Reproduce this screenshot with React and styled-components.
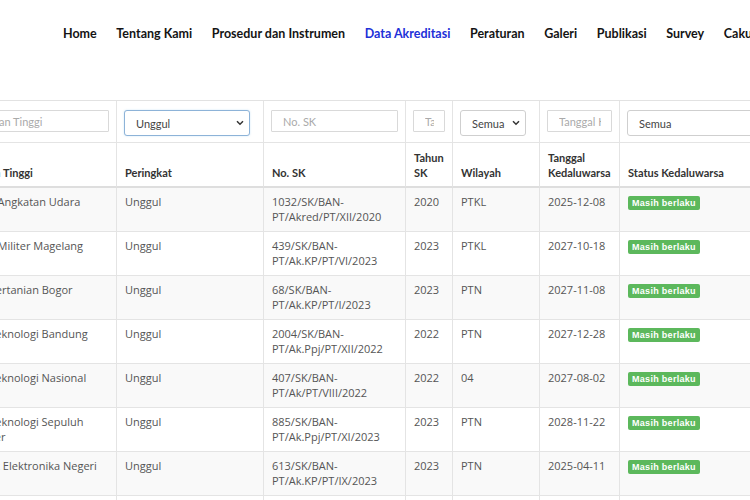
import React from 'react'
import styled, { createGlobalStyle, css } from 'styled-components'

const GlobalStyle = createGlobalStyle`
  html, body {
    margin: 0;
    padding: 0;
    background: #fff;
  }
  body {
    font-family: 'Open Sans', 'Liberation Sans', sans-serif;
    overflow: hidden;
  }
`

const menu = ['Home', 'Tentang Kami', 'Prosedur dan Instrumen', 'Data Akreditasi', 'Peraturan', 'Galeri', 'Publikasi', 'Survey', 'Cakupan']

const rows = [
  ['Akademi Angkatan Udara', '1032/SK/BAN-PT/Akred/PT/XII/2020', '2020', 'PTKL', '2025-12-08'],
  ['Akademi Militer Magelang', '439/SK/BAN-PT/Ak.KP/PT/VI/2023', '2023', 'PTKL', '2027-10-18'],
  ['Institut Pertanian Bogor', '68/SK/BAN-PT/Ak.KP/PT/I/2023', '2023', 'PTN', '2027-11-08'],
  ['Institut Teknologi Bandung', '2004/SK/BAN-PT/Ak.Ppj/PT/XII/2022', '2022', 'PTN', '2027-12-28'],
  ['Institut Teknologi Nasional', '407/SK/BAN-PT/Ak/PT/VIII/2022', '2022', '04', '2027-08-02'],
  ['Institut Teknologi Sepuluh Nopember', '885/SK/BAN-PT/Ak.Ppj/PT/XI/2023', '2023', 'PTN', '2028-11-22'],
  ['Politeknik Elektronika Negeri Surabaya', '613/SK/BAN-PT/Ak.KP/PT/IX/2023', '2023', 'PTN', '2025-04-11'],
  ['Universitas Airlangga', '1287/SK/BAN-PT/Ak.Ppj/PT/XII/2022', '2022', 'PTN', '2027-12-20']
]

const widths = [175, 147, 142, 47, 87, 80, 170]

const Dropdown = ({ value, options, focused, wide, arrow = true }) => (
  <SelectBox wide={wide}>
    <Select focused={focused} defaultValue={value}>
      {options.map(o => <option key={o}>{o}</option>)}
    </Select>
    {arrow && (
      <Chevron width="8" height="6" viewBox="0 0 8 6">
        <path d="M1 1.2l3 3 3-3" fill="none" stroke="#333" strokeWidth="1.5" />
      </Chevron>
    )}
  </SelectBox>
)

const App = () => (
  <Page>
    <GlobalStyle />
    <Nav>
      {menu.map(item => (
        <NavItem key={item} active={item === 'Data Akreditasi'}>{item}</NavItem>
      ))}
    </Nav>
    <TableWrap>
      <Table>
        <colgroup>
          {widths.map((w, i) => <col key={i} style={{ width: w }} />)}
        </colgroup>
        <thead>
          <tr>
            <FilterCell><Input placeholder="Perguruan Tinggi" /></FilterCell>
            <FilterCell>
              <Dropdown focused value="Unggul" options={['Semua', 'Unggul']} />
            </FilterCell>
            <FilterCell><Input placeholder="No. SK" /></FilterCell>
            <FilterCell><Input placeholder="Tahun SK" /></FilterCell>
            <FilterCell>
              <Dropdown value="Semua" options={['Semua']} />
            </FilterCell>
            <FilterCell><Input placeholder="Tanggal Kedaluwarsa" /></FilterCell>
            <FilterCell>
              <Dropdown wide arrow={false} value="Semua" options={['Semua']} />
            </FilterCell>
          </tr>
          <tr>
            <Th>Perguruan Tinggi</Th>
            <Th>Peringkat</Th>
            <Th>No. SK</Th>
            <Th>Tahun SK</Th>
            <Th>Wilayah</Th>
            <Th>Tanggal Kedaluwarsa</Th>
            <Th>Status Kedaluwarsa</Th>
          </tr>
        </thead>
        <tbody>
          {rows.map((r, i) => (
            <Row key={i} striped={i % 2 === 0}>
              <Td>{r[0]}</Td>
              <Td>Unggul</Td>
              <Td>{r[1]}</Td>
              <Td>{r[2]}</Td>
              <Td>{r[3]}</Td>
              <Td>{r[4]}</Td>
              <Td><Badge>Masih berlaku</Badge></Td>
            </Row>
          ))}
        </tbody>
      </Table>
    </TableWrap>
  </Page>
)

const Page = styled.div`
  width: 750px;
  height: 500px;
  overflow: hidden;
`

const Nav = styled.nav`
  display: flex;
  align-items: center;
  gap: 19.6px;
  height: 66px;
  padding-left: 63px;
  white-space: nowrap;
`

const NavItem = styled.a`
  font-family: Lato, 'Liberation Sans', sans-serif;
  font-weight: 700;
  font-size: 12.5px;
  color: #141414;
  text-decoration: none;

  ${props =>
    props.active &&
    css`
      color: #2130d8;
    `};
`

const TableWrap = styled.div`
  margin-top: 34px;
  overflow: hidden;
`

const Table = styled.table`
  margin-left: -58px;
  table-layout: fixed;
  width: 848px;
  border-collapse: separate;
  border-spacing: 0;
  border-top: 1px solid #e2e2e2;
`

const FilterCell = styled.td`
  padding: 9px 7px 6px;
  vertical-align: top;
  border-right: 1px solid #e4e4e4;
  border-bottom: 1px solid #e4e4e4;
`

const Input = styled.input`
  box-sizing: border-box;
  display: block;
  width: 100%;
  height: 22px;
  padding: 0 10px 0 11px;
  border: 1px solid #d9d9d9;
  border-radius: 1px;
  font-family: Lato, 'Liberation Sans', sans-serif;
  font-size: 11px;
  color: #555;
  outline: none;

  &::placeholder {
    color: #aaa;
  }
`

const SelectBox = styled.div`
  position: relative;
  width: calc(100% - 6px);

  ${props =>
    props.wide &&
    css`
      width: 100%;
    `};
`

const Select = styled.select`
  box-sizing: border-box;
  display: block;
  width: 100%;
  height: 26px;
  padding: 0 13px 0 11px;
  border: 1px solid #cfcfcf;
  border-radius: 3px;
  background: #fff;
  appearance: none;
  font-family: Lato, 'Liberation Sans', sans-serif;
  font-size: 11px;
  color: #444;
  outline: none;

  ${props =>
    props.focused &&
    css`
      border-color: #8db3d8;
      box-shadow: 0 0 2px rgba(102, 175, 233, 0.35);
    `};
`

const Chevron = styled.svg`
  position: absolute;
  right: 6px;
  top: 10px;
  pointer-events: none;
`

const Th = styled.th`
  padding: 7px 8px 6px;
  vertical-align: bottom;
  text-align: left;
  font-family: Lato, 'Liberation Sans', sans-serif;
  font-weight: 700;
  font-size: 11px;
  line-height: 15px;
  color: #333;
  border-right: 1px solid #e4e4e4;
  border-bottom: 2px solid #dedede;
`

const Row = styled.tr`
  background: ${props => (props.striped ? '#f9f9f9' : '#fff')};
`

const Td = styled.td`
  padding: 7px 8px;
  vertical-align: top;
  font-size: 11px;
  line-height: 14.5px;
  color: #555;
  border-right: 1px solid #e4e4e4;
  border-bottom: 1px solid #e4e4e4;
`

const Badge = styled.span`
  display: inline-block;
  padding: 2px 4px;
  border-radius: 2px;
  background: #5cb85c;
  color: #fff;
  font-family: 'Liberation Sans', Arial, sans-serif;
  font-weight: 700;
  font-size: 9px;
  line-height: 10px;
  letter-spacing: 0.3px;
  vertical-align: top;
  margin-top: 1px;
`

export default App
